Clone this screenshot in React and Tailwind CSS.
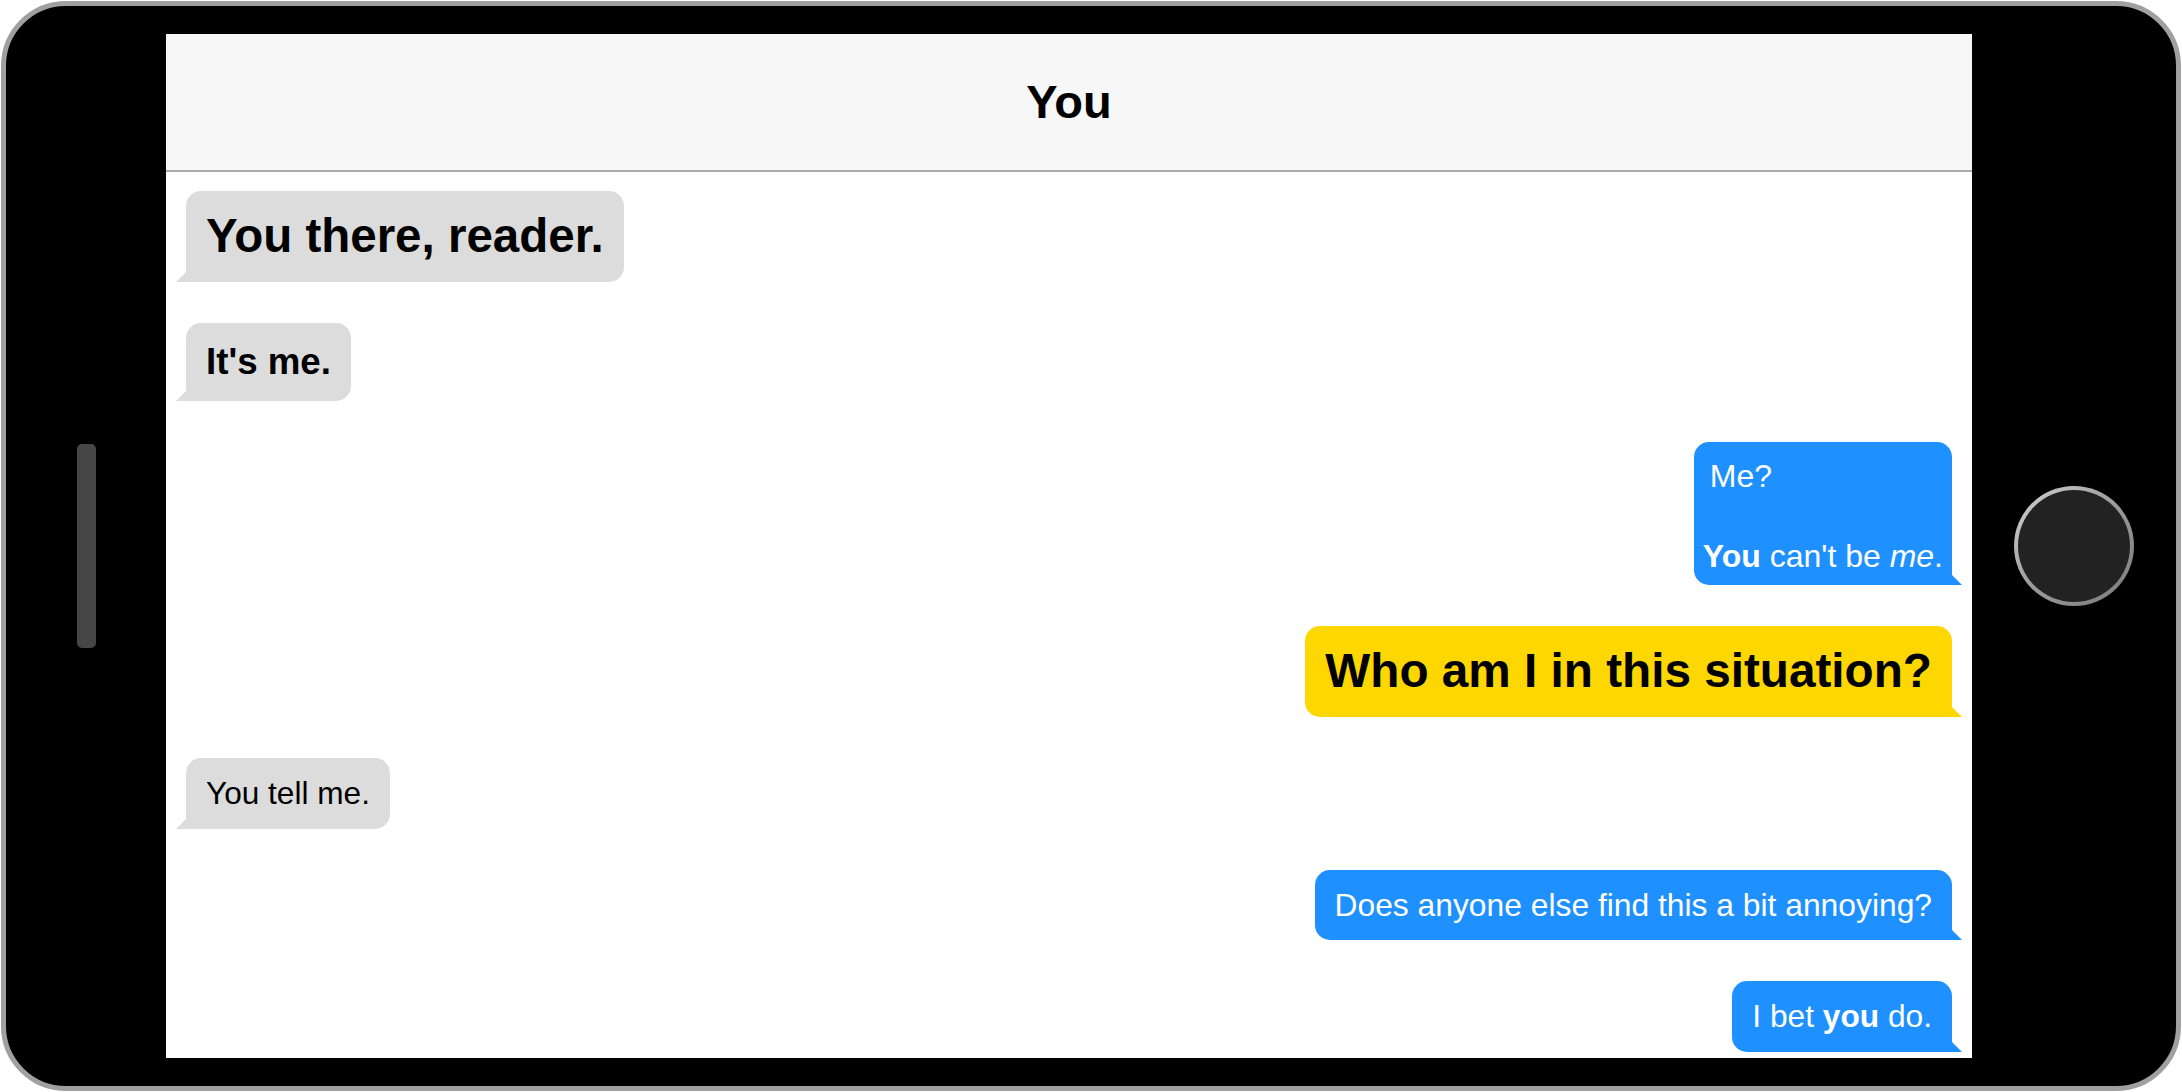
import React from "react";

const messages = [
  { id: 1, side: "left", tone: "gray", size: "text-[47.5px] font-bold py-[18px]", body: <>You there, reader.</> },
  { id: 2, side: "left", tone: "gray", size: "text-[36.7px] font-bold py-[18px]", body: <>It's me.</> },
  { id: 3, side: "right", tone: "blue", custom: true },
  { id: 4, side: "right", tone: "gold", size: "text-[47.7px] font-bold py-[18px]", body: <>Who am I in this situation?</> },
  { id: 5, side: "left", tone: "gray", size: "text-[31.6px] py-[17px]", body: <>You tell me.</> },
  { id: 6, side: "right", tone: "blue", size: "text-[31.8px] py-[17px]", body: <>Does anyone else find this a bit annoying?</> },
  {
    id: 7,
    side: "right",
    tone: "blue",
    size: "text-[31.7px] py-[17px]",
    body: (
      <>
        I bet <b>you</b> do.
      </>
    ),
  },
];

const tones = {
  gray: { bubble: "bg-[#dcdcdc] text-black", tail: "border-b-[#dcdcdc]" },
  blue: { bubble: "bg-[#1e90ff] text-white", tail: "border-b-[#1e90ff]" },
  gold: { bubble: "bg-[#ffd700] text-black", tail: "border-b-[#ffd700]" },
};

function Bubble({ msg }) {
  const tone = tones[msg.tone];
  const left = msg.side === "left";

  return (
    <div
      className={`relative rounded-[15px] leading-[1.15] whitespace-nowrap ${tone.bubble} ${
        left ? "self-start rounded-bl-none" : "self-end rounded-br-none"
      } ${msg.custom ? "px-[9px] pt-[16px] pb-[11px] text-[32px]" : `px-5 ${msg.size}`}`}
    >
      {msg.custom ? (
        <>
          <p className="pl-[7px]">Me?</p>
          <p className="mt-[43px]">
            <b>You</b> can't be <i>me</i>.
          </p>
        </>
      ) : (
        <p>{msg.body}</p>
      )}
      {/* tail */}
      <span
        className={`absolute bottom-0 h-0 w-0 border-b-[10px] ${tone.tail} ${
          left
            ? "-left-[10px] border-l-[10px] border-l-transparent"
            : "-right-[10px] border-r-[10px] border-r-transparent"
        }`}
      />
    </div>
  );
}

export default function App() {
  return (
    <div className="h-[1092px] w-full bg-white p-px font-['Liberation_Sans',Arial,sans-serif]">
      <div className="flex h-full items-center rounded-[65px] border-[5px] border-[#a0a0a0] bg-black">
        {/* left bezel */}
        <div className="flex w-[160px] justify-center">
          <div className="h-[204px] w-[19px] rounded-[5px] bg-[#464646]" />
        </div>

        {/* screen */}
        <div className="flex h-[1024px] w-[1806px] flex-col overflow-hidden bg-white">
          <header className="flex h-[138px] shrink-0 items-center justify-center border-b-2 border-[#aaaaaa] bg-[#f7f7f7]">
            <h1 className="text-[47px] font-bold text-black">You</h1>
          </header>
          <div className="flex flex-col gap-[41px] px-5 pt-[19px]">
            {messages.map((m) => (
              <Bubble key={m.id} msg={m} />
            ))}
          </div>
        </div>

        {/* right bezel */}
        <div className="flex flex-1 justify-center">
          <div className="h-[120px] w-[120px] rounded-full bg-linear-to-br from-[#d4d4d4] via-[#9a9a9a] to-[#7a7a7a] p-[4px]">
            <div className="h-full w-full rounded-full bg-[#222222]" />
          </div>
        </div>
      </div>
    </div>
  );
}
